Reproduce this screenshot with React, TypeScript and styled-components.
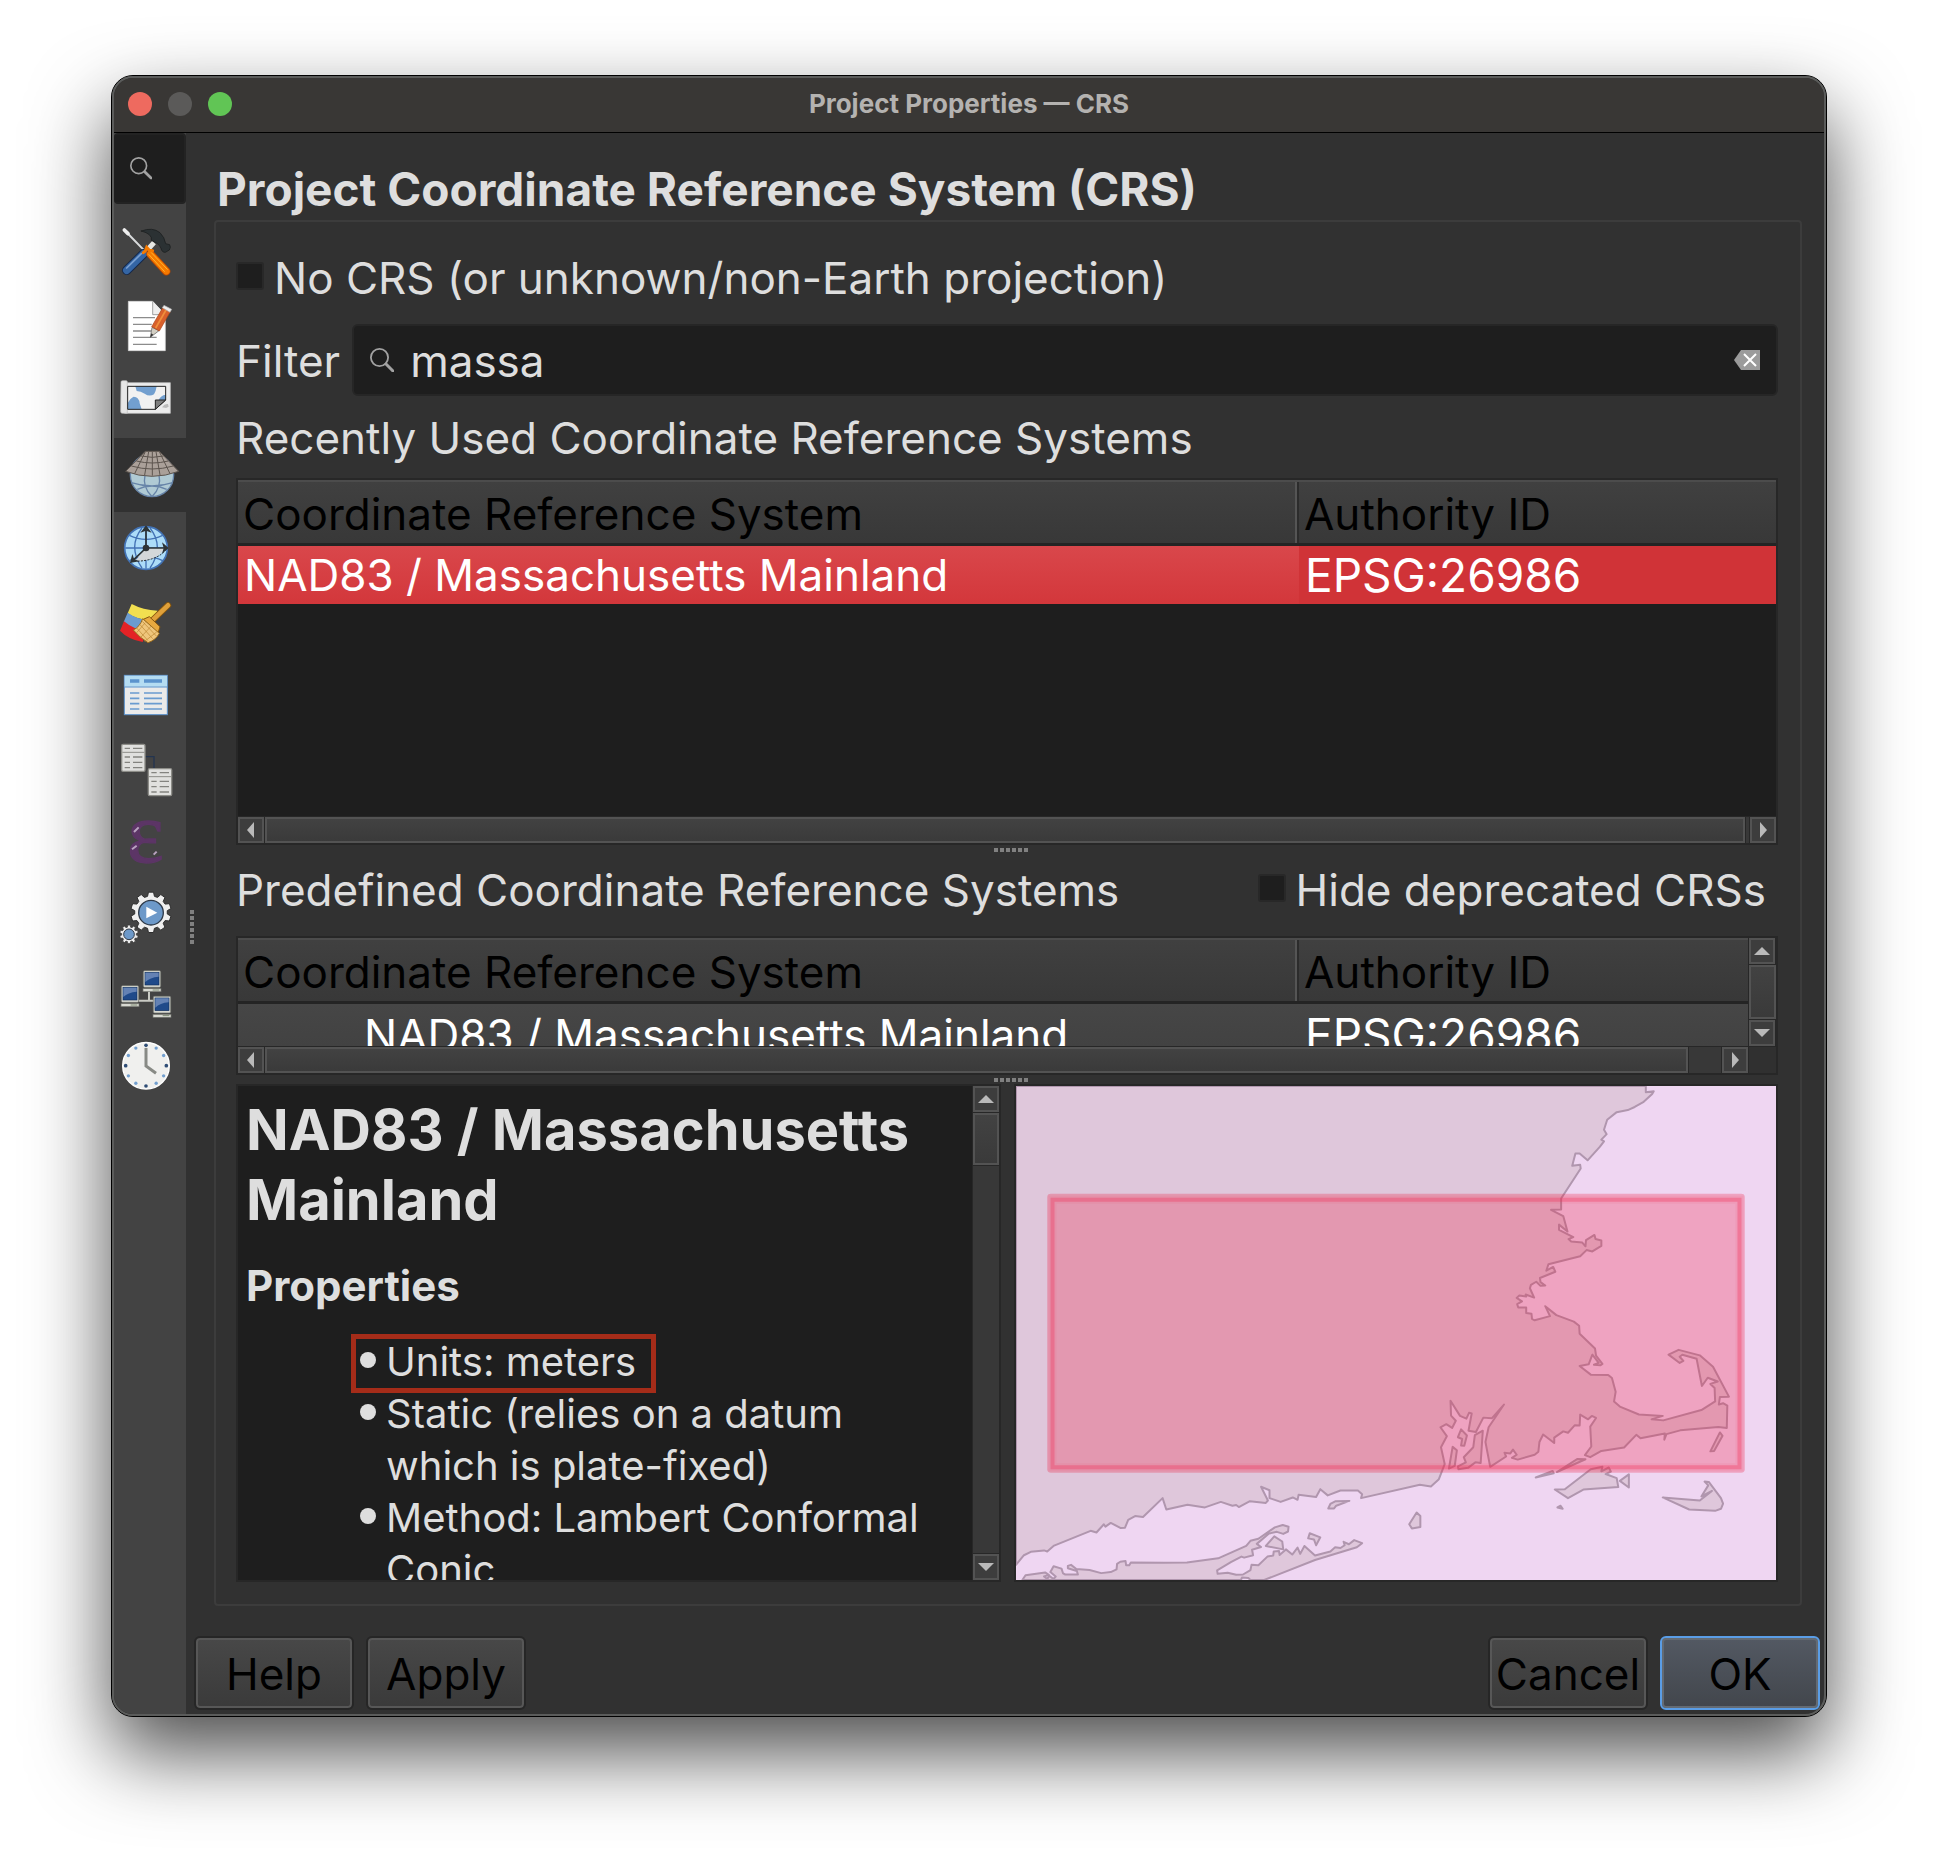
import React from "react";
import styled, { createGlobalStyle, css } from "styled-components";

const color = {
  panel: "#313131",
  sidebar: "#434343",
  well: "#1e1e1e",
  line: "#272727",
  edge: "#535353",
  text: "#dedede",
};

const GlobalStyle = createGlobalStyle`
  *, *::before, *::after { box-sizing: border-box; }
  body { margin: 0; background: #fff; }
  body, button, input { font-family: Inter, "Liberation Sans", sans-serif; }
`;

const Page = styled.div`
  display: flex;
  height: 100vh;
  min-height: 1500px;
  padding: 75px 111px 147px;
`;

const Window = styled.section`
  display: flex;
  flex: 1;
  min-width: 0;
  border: 1px solid #000;
  border-radius: 22px;
  background: #5b5c5b;
  box-shadow: 0 36px 80px rgba(0, 0, 0, 0.7);
`;

const Frame = styled.div`
  display: flex;
  flex: 1;
  flex-direction: column;
  min-width: 0;
  overflow: hidden;
  border: 2px solid #5b5c5b;
  border-radius: 21px;
  background: ${color.panel};
  color: ${color.text};
  font-size: 44px;
  line-height: 56px;
`;

const TitleBar = styled.header`
  display: grid;
  grid-template-columns: 1fr auto 1fr;
  align-items: center;
  height: 55px;
  flex: none;
  padding: 0 14px 2px;
  border-bottom: 1px solid #000;
  background: #393735;
`;

const Lights = styled.div`
  display: flex;
  gap: 16px;
`;

const Light = styled.button<{ $tint: string }>`
  width: 24px;
  height: 24px;
  padding: 0;
  border: 0;
  border-radius: 50%;
  background: ${(p) => p.$tint};
`;

const WindowTitle = styled.div`
  color: #b4b2b0;
  font-size: 26px;
  font-weight: 700;
  line-height: 32px;
`;

const Body = styled.div`
  display: flex;
  flex: 1;
  min-height: 0;
`;

const Sidebar = styled.aside`
  width: 72px;
  flex: none;
  background: ${color.sidebar};
`;

const SideSearch = styled.label`
  display: flex;
  align-items: center;
  height: 71px;
  padding: 0 16px 2px;
  border: 2px solid #232323;
  border-left-width: 0;
  border-radius: 4px;
  background: ${color.well};
`;

const SideInput = styled.input`
  width: 16px;
  padding: 0;
  border: 0;
  outline: 0;
  background: transparent;
  color: ${color.text};
`;

const SideNav = styled.nav`
  display: flex;
  flex-direction: column;
  padding-top: 12px;
`;

const SideItem = styled.button<{ $active: boolean }>`
  display: flex;
  align-items: center;
  height: 74px;
  padding: 0 0 0 ${(p) => (p.$active ? 12 : 6)}px;
  border: 0;
  background: ${(p) => (p.$active ? color.panel : "transparent")};

  svg {
    width: 52px;
    height: 52px;
    overflow: visible;
  }
`;

const dots = (angle: string) => css`
  background: repeating-linear-gradient(${angle}, #808080 0 4px, transparent 4px 6px);
`;

const SideSplitter = styled.div`
  display: flex;
  align-items: center;
  justify-content: flex-end;
  width: 8px;
  flex: none;
  padding-top: 6px;

  &::before {
    content: "";
    width: 4px;
    height: 34px;
    ${dots("180deg")}
  }
`;

const Splitter = styled.div<{ $after: number }>`
  display: flex;
  justify-content: center;
  flex: none;
  padding: 3px 0 ${(p) => p.$after}px;

  &::before {
    content: "";
    width: 34px;
    height: 4px;
    margin-left: 8px;
    ${dots("90deg")}
  }
`;

const Main = styled.main`
  display: flex;
  flex: 1;
  flex-direction: column;
  min-width: 0;
  padding: 28px 4px 4px 0;
`;

const Heading = styled.h1`
  margin: 0 23px 3px;
  font-size: 46px;
  font-weight: 700;
  line-height: 56px;
`;

const Group = styled.div`
  display: flex;
  flex: 1;
  flex-direction: column;
  min-height: 0;
  margin: 0 18px 30px 20px;
  padding: 28px 22px 22px 20px;
  border: 2px solid #3c3c3c;
  border-radius: 4px;
`;

const CheckLabel = styled.label`
  display: flex;
  align-items: center;
  gap: 10px;
`;

const Check = styled.input`
  appearance: none;
  width: 28px;
  height: 28px;
  margin: 0 0 4px;
  border: 2px solid #282828;
  border-radius: 3px;
  background: ${color.well};

  &:checked {
    background: #8a8a8a;
  }
`;

const FilterRow = styled.div`
  display: flex;
  align-items: center;
  gap: 12px;
  margin: 18px 0 14px;
`;

const FilterLabel = styled.label`
  padding-top: 2px;
`;

const FilterBox = styled.div`
  display: flex;
  align-items: center;
  flex: 1;
  height: 72px;
  padding: 0 16px;
  border: 2px solid #262626;
  border-radius: 6px;
  background: ${color.well};
`;

const FilterInput = styled.input`
  flex: 1;
  min-width: 0;
  height: 56px;
  padding: 2px 0 0 16px;
  border: 0;
  outline: 0;
  background: transparent;
  color: ${color.text};
  font-size: 44px;
`;

const PlainButton = styled.button`
  display: flex;
  padding: 0;
  border: 0;
  background: none;
`;

const SectionRow = styled.div`
  display: flex;
  align-items: center;
  justify-content: space-between;
  padding-right: 12px;
`;

const SectionTitle = styled.h2`
  margin: 0;
  font-size: 44px;
  font-weight: 400;
  line-height: 56px;
`;

const TreeFrame = styled.div<{ $height: number; $gap: number; $scrollY?: boolean }>`
  display: grid;
  grid-template-columns: minmax(0, 1fr) ${(p) => (p.$scrollY ? "28px" : "")};
  grid-template-rows: minmax(0, 1fr) 27px;
  flex: none;
  height: ${(p) => p.$height}px;
  margin-top: ${(p) => p.$gap}px;
  border: 2px solid ${color.line};
  background: ${color.well};
`;

const TreeView = styled.div`
  overflow: hidden;
`;

const Tree = styled.table`
  width: 100%;
  table-layout: fixed;
  border-collapse: separate;
  border-spacing: 0;
  text-align: left;
  white-space: nowrap;
`;

const NameColumn = styled.col`
  width: 1061px;
`;

const HeadCell = styled.th<{ $divided?: boolean }>`
  height: 66px;
  padding: 2px 5px 0;
  border-top: 2px solid #4c4c4c;
  border-bottom: 3px solid #242424;
  background: linear-gradient(#404040, #383838);
  box-shadow: ${(p) => (p.$divided ? "inset -2px 0 #2c2c2c, inset -4px 0 #555" : "none")};
  color: #000;
  font-weight: 400;
`;

type Tone = "name" | "id" | "idle";

const cellBackground: Record<Tone, string> = {
  name: "linear-gradient(#d9474b, #d3373b)",
  id: "#d03337",
  idle: "linear-gradient(#464646, #404040)",
};

const Cell = styled.td<{ $tone: Tone; $indent?: boolean; $code?: boolean }>`
  height: ${(p) => (p.$tone === "idle" ? 62 : 58)}px;
  padding: 0 0 0 ${(p) => (p.$indent ? 126 : 6)}px;
  background: ${(p) => cellBackground[p.$tone]};
  color: #fff;
  font-size: ${(p) => (p.$code ? 46 : 44)}px;
`;

const Bar = styled.div<{ $vertical?: boolean }>`
  display: flex;
  flex-direction: ${(p) => (p.$vertical ? "column" : "row")};
  gap: 1px;
  border-${(p) => (p.$vertical ? "left" : "top")}: 1px solid ${color.line};
  background: #383838;
`;

const Arrow = styled.button`
  display: grid;
  place-items: center;
  width: 26px;
  height: 26px;
  flex: none;
  padding: 0;
  border: 2px solid ${color.edge};
  outline: 1px solid ${color.line};
  background: #3d3d3d;
`;

const Thumb = styled.div<{ $length?: number }>`
  flex: ${(p) => (p.$length ? `0 0 ${p.$length}px` : "1")};
  border: 2px solid ${color.edge};
  outline: 1px solid ${color.line};
  background: linear-gradient(#424242, #3a3a3a);
`;

const Track = styled.div<{ $length?: number }>`
  flex: ${(p) => (p.$length ? `0 0 ${p.$length}px` : "1")};
`;

const Corner = styled.div`
  border: solid ${color.line};
  border-width: 1px 0 0 1px;
  background: #303030;
`;

const Details = styled.div`
  display: flex;
  flex: 1;
  gap: 13px;
  min-height: 0;
`;

const InfoPane = styled.div`
  display: grid;
  grid-template-columns: minmax(0, 1fr) 27px;
  flex: 765 1 0;
  min-width: 0;
  border: 2px solid ${color.line};
  background: ${color.well};
`;

const InfoText = styled.article`
  overflow: hidden;
  padding: 9px 8px 0;
`;

const InfoTitle = styled.h2`
  margin: 0 0 25px;
  font-size: 56px;
  font-weight: 700;
  line-height: 70px;
`;

const InfoSubtitle = styled.h3`
  margin: 0 0 24px;
  font-size: 42px;
  font-weight: 700;
  line-height: 52px;
`;

const InfoList = styled.ul`
  display: flex;
  flex-direction: column;
  align-items: flex-start;
  margin: 0;
  padding: 0 0 0 114px;
  font-size: 40px;
  line-height: 52px;
  list-style: none;
`;

const InfoItem = styled.li<{ $marked?: boolean }>`
  position: relative;
  display: flex;
  gap: 10px;

  &::before {
    content: "";
    width: 16px;
    height: 16px;
    flex: none;
    margin-top: 16px;
    border-radius: 50%;
    background: ${color.text};
  }

  ${(p) =>
    p.$marked &&
    css`
      &::after {
        content: "";
        position: absolute;
        inset: -2px -20px -5px -9px;
        border: 5px solid #a52c19;
      }
    `}
`;

const MapPane = styled.div`
  flex: 764 1 0;
  min-width: 0;
  border: 2px solid ${color.line};

  svg {
    display: block;
    width: 100%;
    height: 100%;
  }
`;

const Footer = styled.footer`
  display: flex;
  gap: 12px;
`;

const Push = styled.div`
  flex: 1;
`;

const DialogButton = styled.button<{ $primary?: boolean }>`
  width: 160px;
  height: 74px;
  padding: 2px 0 0;
  border: 2px solid ${(p) => (p.$primary ? "#5a9de6" : "#262626")};
  border-radius: 6px;
  background: ${(p) =>
    p.$primary ? "linear-gradient(#535963, #42464c)" : "linear-gradient(#484848, #3a3a3a)"};
  box-shadow: inset 0 0 0 2px ${(p) => (p.$primary ? "#646b73" : "#575757")};
  color: #000;
  font-size: 44px;
  line-height: 56px;
`;

function Magnifier() {
  return (
    <svg width="24" height="24" viewBox="0 0 24 24" fill="none" stroke="#a2a2a2" aria-hidden="true">
      <circle cx="9.5" cy="9.5" r="8.6" strokeWidth="1.8" />
      <path d="M16 16l7 7" strokeWidth="3" strokeLinecap="round" />
    </svg>
  );
}

const arrowPaths = {
  left: "M14 3v16L7 11z",
  right: "M8 3v16l7-8z",
  up: "M3 15h16L11 7z",
  down: "M3 7h16l-8 8z",
};

function ScrollArrow({ to }: { to: keyof typeof arrowPaths }) {
  return (
    <Arrow type="button" aria-label={`Scroll ${to}`}>
      <svg width="22" height="22" viewBox="0 0 22 22" aria-hidden="true">
        <path d={arrowPaths[to]} fill="#b9b9b9" />
      </svg>
    </Arrow>
  );
}

const gearPath = (cx: number, cy: number, outer: number, inner: number, teeth: number) => {
  const step = (Math.PI * 2) / teeth;
  const at = (r: number, a: number) =>
    `${(cx + r * Math.cos(a)).toFixed(1)} ${(cy + r * Math.sin(a)).toFixed(1)}`;
  let d = "";
  for (let i = 0; i < teeth; i++) {
    const a = i * step + step / 2;
    d += `${i ? "L" : "M"}${at(inner, a - step * 0.34)}L${at(outer, a - step * 0.2)}L${at(outer, a + step * 0.2)}L${at(inner, a + step * 0.34)}`;
  }
  return `${d}Z`;
};

function Computer({ x, y }: { x: number; y: number }) {
  return (
    <g transform={`translate(${x} ${y})`}>
      <rect x="0" y="0" width="52" height="50" rx="4" fill="#d8d9d2" stroke="#70726c" strokeWidth="2" />
      <rect x="5" y="5" width="42" height="38" fill="#1f4a8a" stroke="#14305c" strokeWidth="2" />
      <path d="M6 6h40v12Q20 20 6 34z" fill="#6482b4" />
      <rect x="-1" y="54" width="54" height="9" fill="#d8d9d2" stroke="#70726c" strokeWidth="2" />
      <path d="M28 58h20" stroke="#7d8a72" strokeWidth="3" />
    </g>
  );
}

function Sheet({ x, y }: { x: number; y: number }) {
  return (
    <g transform={`translate(${x} ${y})`}>
      <rect width="70" height="81" rx="4" fill="#e0e0de" stroke="#8d8d88" strokeWidth="4" />
      <path d="M2 24h66" stroke="#8d8d88" strokeWidth="3" />
      <path
        d="M9 12h16M34 12h28M9 38h16M34 38h28M9 54h16M34 54h28M9 70h16M34 70h28"
        stroke="#83837f"
        strokeWidth="4"
      />
    </g>
  );
}

const clockDots = Array.from({ length: 12 }, (_, i) => {
  const a = (i * Math.PI) / 6;
  return { x: 108 + 61 * Math.cos(a), y: 1247 + 61 * Math.sin(a), main: i % 3 === 0 };
});

const sections: { name: string; box: string; art: React.ReactNode; active?: boolean }[] = [
  {
    name: "General",
    box: "30 81 156 156",
    art: (
      <g strokeLinecap="round">
        <path d="M46 93l60 62" stroke="#d9dbdc" strokeWidth="6" />
        <path d="M43 90l11 11" stroke="#eee" strokeWidth="11" />
        <path d="M101 161l-51 50" stroke="#16294a" strokeWidth="28" />
        <path d="M101 161l-51 50" stroke="#3465a4" strokeWidth="22" />
        <path d="M94 161l-44 43" stroke="#7ba1d2" strokeWidth="5" />
        <path d="M132 128l-20 22" stroke="#e6e6e2" strokeWidth="15" strokeLinecap="butt" />
        <path
          d="M94 93Q128 80 150 98Q164 112 167 131L179 134Q184 142 178 150L166 157Q156 158 153 145Q150 136 141 130L124 121Q128 102 94 93Z"
          fill="#2b3133"
          stroke="#16191a"
          strokeWidth="2"
        />
        <path d="M121 162l48 52" stroke="#b84700" strokeWidth="25" />
        <path d="M121 162l48 52" stroke="#f57900" strokeWidth="20" />
        <path d="M100 158l6-5 4-11 8 9 10 1" fill="none" stroke="#f57900" strokeWidth="9" />
        <path d="M124 158l48 50M117 164l46 50" stroke="#ffb52c" strokeWidth="3" />
      </g>
    ),
  },
  {
    name: "Metadata",
    box: "30 303 156 156",
    art: (
      <g>
        <path d="M55 304h73l38 40v108H55z" fill="#fff" stroke="#dadada" strokeWidth="2" />
        <path d="M128 304v40h38" fill="#eee" stroke="#777" strokeWidth="2" />
        <path d="M69 353h66M69 373h56M69 393h54M69 412h71M69 433h71" stroke="#8c8c8c" strokeWidth="4" />
        <path d="M121 412l5-30 21 10z" fill="#d3cfc4" stroke="#555" strokeWidth="2" />
        <path d="M121 412l3-12 6 4z" fill="#333" />
        <path d="M125 380l34-58 22 13-33 58z" fill="#d9602b" stroke="#a8441a" strokeWidth="2" />
        <path d="M137 384l31-54" stroke="#f08f3c" strokeWidth="5" />
        <path d="M157 323l5-7 23 12-5 9z" fill="#eee" stroke="#aaa" strokeWidth="2" />
      </g>
    ),
  },
  {
    name: "View Settings",
    box: "30 525 156 156",
    art: (
      <g>
        <path d="M44 548h137v92H44z" fill="#ececec" stroke="#c4c4c4" strokeWidth="2" />
        <path d="M33 546q0-4 5-4h10q4 0 4 4v94H38q-7 0-6-8z" fill="#e6e6e6" stroke="#bdbdbd" strokeWidth="2" />
        <path d="M53 559h114v41l-31 28H53z" fill="#f1f1f1" />
        <path d="M76 559h64q-2 14-8 24-14 8-28-2-12-8-24-8z" fill="#729fcf" />
        <path d="M53 628v-18q8-16 18-20 16 0 18 20l6 18zM146 600q6-14 21-16v16z" fill="#729fcf" />
        <path d="M53 559h114v41l-31 28H53z" fill="none" stroke="#222" strokeWidth="3" />
        <path d="M136 628v-28h31z" fill="#7d7d7d" stroke="#222" strokeWidth="3" />
        <path d="M156 622q8-12 18-10l2 8-8 4z" fill="#bbb" />
      </g>
    ),
  },
  {
    name: "CRS",
    box: "48 747 156 156",
    active: true,
    art: (
      <g>
        <circle cx="126" cy="825" r="65" fill="#b0cad4" stroke="#6784a8" strokeWidth="4" />
        <path
          d="M64 848q62 20 124 0M105 825q-8 36 20 64M147 825q8 36-20 64M82 868q44-20 88 0"
          fill="none"
          stroke="#6784a8"
          strokeWidth="4"
        />
        <path d="M106 754h42l58 60q-80 30-159 0z" fill="#aaa099" stroke="#5d554f" strokeWidth="3" />
        <path
          d="M93 768q34 8 68 0M79 783q48 12 96 0M64 798q62 18 126 0M116 755l-12 70M138 755l12 70M127 755v72M106 755l-32 66M148 755l32 66"
          fill="none"
          stroke="#5d554f"
          strokeWidth="3"
        />
      </g>
    ),
  },
  {
    name: "Transformations",
    box: "30 969 156 156",
    art: (
      <g>
        <circle cx="108" cy="1044" r="64" fill="#acdcf8" stroke="#4272b4" strokeWidth="5" />
        <path
          d="M58 1006q50 24 100 0M46 1044h124M58 1082q50-24 100 0M108 982v124M96 984q-44 56 0 120M120 984q44 56 0 120"
          fill="none"
          stroke="#4272b4"
          strokeWidth="4"
        />
        <path d="M108 1044h56q-20 40-88 38z" fill="#d3d7d9" />
        <path d="M168 1048q-24 34-92 36" fill="none" stroke="#222" strokeWidth="3" strokeDasharray="6 4" />
        <path d="M108 986v58h58M108 1044l-42 40" fill="none" stroke="#2d3335" strokeWidth="5" />
        <circle cx="108" cy="1044" r="10" fill="#2d3335" />
        <path d="M108 976l-17 22 17-6 17 6zM176 1044l-20-17 5 17-5 17zM60 1089l7-27 5 14 15 8z" fill="#2d3335" />
      </g>
    ),
  },
  {
    name: "Styles",
    box: "30 1191 156 156",
    art: (
      <g>
        <path d="M65 1212q34 18 78 20l-18 30q-44-2-72-22z" fill="#f2df50" />
        <path d="M53 1238q30 22 74 24l-20 34q-42-8-66-30z" fill="#6b9bd0" />
        <path d="M42 1264q28 24 68 30l-12 32q-44-8-68-34z" fill="#e32226" />
        <path d="M126 1262l48-46" stroke="#85550d" strokeWidth="19" strokeLinecap="round" />
        <path d="M126 1262l48-46" stroke="#dfa03a" strokeWidth="14" strokeLinecap="round" />
        <path d="M100 1258l18-8 32 30-6 20z" fill="#e8a93f" stroke="#85550d" strokeWidth="3" />
        <path d="M98 1256l50 44q-10 20-34 28-24-14-44-38 20-10 28-34z" fill="#efc67c" stroke="#9a6b1c" strokeWidth="3" />
        <path d="M80 1284l34 38M90 1274l38 42M97 1264l42 44M104 1324l36-28M92 1312l32-34M80 1298l26-30" stroke="#b98531" strokeWidth="2" />
      </g>
    ),
  },
  {
    name: "Data Sources",
    box: "30 63 156 156",
    art: (
      <g>
        <rect x="43" y="76" width="129" height="118" fill="#eaeaea" stroke="#5b93cd" strokeWidth="3" />
        <path d="M44 77h127v33H44z" fill="#b4dcf2" />
        <path d="M43 111h129" stroke="#5b93cd" strokeWidth="3" />
        <path d="M60 93h28M102 93h54" stroke="#5b93cd" strokeWidth="11" />
        <path
          d="M60 129h28M102 129h54M60 145h28M102 145h54M60 161h28M102 161h54M60 177h28M102 177h54"
          stroke="#6a9bd0"
          strokeWidth="5"
        />
      </g>
    ),
  },
  {
    name: "Relations",
    box: "30 285 156 156",
    art: (
      <g>
        <path d="M106 320h26v36" fill="none" stroke="#23344f" strokeWidth="4" />
        <Sheet x={35} y={283} />
        <Sheet x={115} y={356} />
      </g>
    ),
  },
  {
    name: "Variables",
    box: "30 507 156 156",
    art: (
      <g>
        <text
          x="106"
          y="635"
          fill="#5c3566"
          stroke="#5c3566"
          strokeWidth="4"
          fontFamily="Liberation Serif, serif"
          fontSize="262"
          textAnchor="middle"
        >
          ε
        </text>
        <path d="M72 546l14-14M66 598l14-11M131 614l9-9" stroke="#b9a3c0" strokeWidth="6" />
      </g>
    ),
  },
  {
    name: "Macros",
    box: "30 729 156 156",
    art: (
      <g>
        <path d={gearPath(123, 787, 61, 49, 10)} fill="#efefef" stroke="#2e2e2e" strokeWidth="3" />
        <circle cx="123" cy="788" r="37" fill="#6d99c9" stroke="#2f3a48" strokeWidth="4" />
        <path d="M109 770v35l33-17z" fill="#fff" />
        <path d={gearPath(57, 853, 28, 22, 10)} fill="#efefef" stroke="#3a3a3a" strokeWidth="2" />
        <circle cx="57" cy="853" r="16" fill="#6d99c9" stroke="#2f3a48" strokeWidth="3" />
      </g>
    ),
  },
  {
    name: "QGIS Server",
    box: "30 951 156 156",
    art: (
      <g>
        <path d="M117 1020v32M86 1052h46" stroke="#c9cac4" strokeWidth="6" />
        <Computer x={100} y={962} />
        <Computer x={34} y={1007} />
        <Computer x={130} y={1039} />
      </g>
    ),
  },
  {
    name: "Temporal",
    box: "30 1173 156 156",
    art: (
      <g>
        <circle cx="108" cy="1247" r="70" fill="#f0f0ee" stroke="#fff" strokeWidth="4" />
        {clockDots.map((d, i) => (
          <circle key={i} cx={d.x} cy={d.y} r={d.main ? 5.5 : 5} fill={d.main ? "#2f4d76" : "#729fcf"} />
        ))}
        <path d="M108 1194v54l30 22" fill="none" stroke="#888a85" strokeWidth="9" />
      </g>
    ),
  },
];

const mainlandPath =
  "M11 45H1201V63L1216 60L1213 68L1197 91L1180 106L1167 115L1146 121L1128 143L1122 172L1127 185L1117 201L1122 206L1114 222L1091 261L1076 241L1068 241L1062 277L1077 274L1078 285L1041 372L1041 404L1022 405L1045 423L1053 468L1037 448L1037 463L1064 484L1055 490L1060 497L1081 500L1087 511L1088 493L1104 478L1106 490L1117 494L1117 510L1100 526L1089 522L1077 540L1017 563L1013 582L1026 571L1030 585L1001 603L1002 615L1011 625L1002 626L994 614L984 623L982 633L990 660L974 651L975 657L962 654L957 661L967 671L958 679L960 689L975 689L975 705L985 707L986 722L991 726L1020 714L1011 685L1032 711L1065 730L1075 742L1076 765L1105 808L1107 829L1119 853L1115 857L1103 855L1112 850L1100 826L1093 854L1076 859L1097 884L1130 885L1137 894L1144 934L1141 962L1152 977L1188 1000L1233 1004L1212 1014L1234 1017L1306 987L1332 962L1331 923L1323 911L1337 904L1318 893L1307 917L1297 838L1270 826L1265 832L1272 844L1265 850L1244 826L1263 812L1303 828L1328 861L1358 948L1341 949L1339 971L1347 967L1355 974L1354 1039L1338 1036L1266 1046L1240 1057L1236 1073L1237 1055L1191 1069L1183 1059L1160 1096L1117 1106L1096 1124L1086 1118L1098 1093L1096 1035L1107 1010L1099 1004L1092 1014L1077 1000L1076 1032L1067 1031L1054 1053L1045 1049L1028 1067L1028 1083L1007 1058L1000 1080L998 1108L991 1117L959 1131L948 1126L957 1117L950 1102L945 1113L934 1111L937 1122L907 1152L898 1080L904 1037L933 971L910 1011L894 1009L880 1051L866 1047L872 997L867 995L862 1012L850 1004L832 960L833 1003L842 1018L835 1039L824 1028L813 1037L825 1063L814 1095L821 1144L810 1188L795 1209L774 1204L663 1243L665 1232L657 1221L624 1221L600 1235L586 1217L578 1240L545 1233L543 1248L534 1241L511 1254L490 1243L490 1220L474 1210L487 1250L483 1257L453 1252L432 1269L427 1263L420 1265L398 1254L368 1270L335 1262L295 1276L288 1243L251 1298L236 1295L223 1306L217 1329L209 1330L190 1315L180 1326L177 1319L163 1343L152 1338L83 1381L70 1398L64 1395L39 1399L26 1409L11 1437Z";

const islandPaths = [
  "M23 1481L29 1467L66 1459L73 1466L64 1471L70 1478L74 1469L82 1478L86 1471L76 1458L82 1441L97 1448L100 1462L104 1465L128 1465L126 1455L109 1447L109 1440L115 1437L125 1449L150 1452L172 1461L190 1458L201 1450L202 1434L208 1428L218 1426L219 1438L225 1438L228 1430L290 1431L334 1430L393 1418L446 1382L454 1367L469 1361L500 1328L515 1321L526 1326L525 1340L516 1347L504 1341L489 1346L466 1376L474 1385L457 1393L459 1409L442 1416L437 1413L417 1429L391 1453L392 1463L411 1460L427 1466L440 1465L454 1452L456 1437L469 1438L486 1413L497 1410L498 1398L508 1397L509 1408L521 1392L533 1407L543 1387L548 1405L556 1382L576 1410L605 1398L614 1386L624 1388L632 1380L630 1370L640 1377L650 1365L665 1374L655 1386L576 1423L480 1481H454L450 1475L438 1474L436 1481Z",
  "M483 1382L499 1354L514 1369L516 1392Z",
  "M566 1345L586 1357L578 1380L574 1363L563 1360Z",
  "M601 1273L605 1260L615 1252L641 1251L616 1265L612 1273Z",
  "M768 1285L775 1295L775 1327L759 1331L754 1319Z",
  "M1054 1243L1029 1218L1048 1217L1097 1159L1119 1152L1117 1165L1131 1154L1135 1166L1125 1173L1146 1185L1149 1211L1083 1218Z",
  "M1152 1193L1169 1174V1212Z",
  "M993 1183L1025 1164L1027 1171Z",
  "M1033 1167L1072 1129L1087 1130Z",
  "M1341 1052L1346 1062L1330 1106L1323 1107Z",
  "M1312 1195L1320 1196L1343 1243L1347 1259L1343 1274L1332 1280L1283 1276L1233 1241L1303 1250L1326 1222L1306 1238L1319 1206Z",
  "M1034 1270L1040 1265L1044 1274Z",
  "M829 1157L836 1094L844 1104L840 1149Z",
  "M852 1043L863 1061L858 1091L852 1090L854 1071L846 1066Z",
  "M893 1047L889 1141L879 1139L865 1155L847 1159L846 1151L861 1139L857 1124L875 1095L878 1060Z",
];

function ExtentMap() {
  return (
    <svg viewBox="11 45 1436 1436" preserveAspectRatio="none" role="img" aria-label="Area of use">
      <rect x="11" y="45" width="1436" height="1436" fill="#efd6f2" />
      <g fill="#dfc7db" stroke="#b096ae" strokeWidth="2" strokeLinejoin="round">
        <path d={mainlandPath} vectorEffect="non-scaling-stroke" />
        {islandPaths.map((d) => (
          <path key={d} d={d} vectorEffect="non-scaling-stroke" />
        ))}
      </g>
      <rect x="70" y="358" width="1318" height="811" rx="7" ry="10" fill="#f00c2e" fillOpacity="0.25" />
      <path
        d="M80 376H1378V1153H80Z"
        fill="none"
        stroke="#f4365a"
        strokeOpacity="0.34"
        strokeWidth="4"
        vectorEffect="non-scaling-stroke"
      />
      <path
        d="M80 376H1378V1153H80Z"
        fill="none"
        stroke="#f4365a"
        strokeOpacity="0.08"
        strokeWidth="8"
        vectorEffect="non-scaling-stroke"
      />
    </svg>
  );
}

function TreeHead() {
  return (
    <>
      <colgroup>
        <NameColumn />
        <col />
      </colgroup>
      <thead>
        <tr>
          <HeadCell scope="col" $divided>
            Coordinate Reference System
          </HeadCell>
          <HeadCell scope="col">Authority ID</HeadCell>
        </tr>
      </thead>
    </>
  );
}

export default function App() {
  return (
    <Page>
      <GlobalStyle />
      <Window>
        <Frame>
          <TitleBar>
            <Lights>
              <Light type="button" aria-label="Close" $tint="#ee6a5f" />
              <Light type="button" aria-label="Minimize" $tint="#5b5a59" />
              <Light type="button" aria-label="Zoom" $tint="#61c555" />
            </Lights>
            <WindowTitle>Project Properties — CRS</WindowTitle>
          </TitleBar>
          <Body>
            <Sidebar>
              <SideSearch>
                <Magnifier />
                <SideInput type="text" aria-label="Search options" />
              </SideSearch>
              <SideNav>
                {sections.map((s) => (
                  <SideItem key={s.name} type="button" aria-label={s.name} $active={!!s.active}>
                    <svg viewBox={s.box} aria-hidden="true">
                      {s.art}
                    </svg>
                  </SideItem>
                ))}
              </SideNav>
            </Sidebar>
            <SideSplitter />
            <Main>
              <Heading>Project Coordinate Reference System (CRS)</Heading>
              <Group>
                <CheckLabel>
                  <Check type="checkbox" />
                  No CRS (or unknown/non-Earth projection)
                </CheckLabel>
                <FilterRow>
                  <FilterLabel htmlFor="crs-filter">Filter</FilterLabel>
                  <FilterBox>
                    <Magnifier />
                    <FilterInput id="crs-filter" type="text" defaultValue="massa" />
                    <PlainButton type="button" aria-label="Clear filter">
                      <svg width="26" height="20" viewBox="0 0 26 20" aria-hidden="true">
                        <path d="M0 10L7 0h19v20H7z" fill="#9b9b9b" />
                        <path d="M10 4l12 12M22 4L10 16" stroke="#fff" strokeWidth="2" />
                      </svg>
                    </PlainButton>
                  </FilterBox>
                </FilterRow>
                <SectionTitle>Recently Used Coordinate Reference Systems</SectionTitle>
                <TreeFrame $height={367} $gap={12}>
                  <TreeView>
                    <Tree>
                      <TreeHead />
                      <tbody>
                        <tr>
                          <Cell $tone="name">NAD83 / Massachusetts Mainland</Cell>
                          <Cell $tone="id" $code>
                            EPSG:26986
                          </Cell>
                        </tr>
                      </tbody>
                    </Tree>
                  </TreeView>
                  <Bar>
                    <ScrollArrow to="left" />
                    <Thumb />
                    <Track $length={3} />
                    <ScrollArrow to="right" />
                  </Bar>
                </TreeFrame>
                <Splitter $after={10} />
                <SectionRow>
                  <SectionTitle>Predefined Coordinate Reference Systems</SectionTitle>
                  <CheckLabel>
                    <Check type="checkbox" />
                    Hide deprecated CRSs
                  </CheckLabel>
                </SectionRow>
                <TreeFrame $height={139} $gap={18} $scrollY>
                  <TreeView>
                    <Tree>
                      <TreeHead />
                      <tbody>
                        <tr>
                          <Cell $tone="idle" $indent>
                            NAD83 / Massachusetts Mainland
                          </Cell>
                          <Cell $tone="idle" $code>
                            EPSG:26986
                          </Cell>
                        </tr>
                      </tbody>
                    </Tree>
                  </TreeView>
                  <Bar $vertical>
                    <ScrollArrow to="up" />
                    <Thumb />
                    <ScrollArrow to="down" />
                  </Bar>
                  <Bar>
                    <ScrollArrow to="left" />
                    <Thumb />
                    <Track $length={32} />
                    <ScrollArrow to="right" />
                  </Bar>
                  <Corner />
                </TreeFrame>
                <Splitter $after={2} />
                <Details>
                  <InfoPane>
                    <InfoText>
                      <InfoTitle>NAD83 / Massachusetts Mainland</InfoTitle>
                      <InfoSubtitle>Properties</InfoSubtitle>
                      <InfoList>
                        <InfoItem $marked>Units: meters</InfoItem>
                        <InfoItem>Static (relies on a datum which is plate-fixed)</InfoItem>
                        <InfoItem>Method: Lambert Conformal Conic</InfoItem>
                      </InfoList>
                    </InfoText>
                    <Bar $vertical>
                      <ScrollArrow to="up" />
                      <Thumb $length={52} />
                      <Track />
                      <ScrollArrow to="down" />
                    </Bar>
                  </InfoPane>
                  <MapPane>
                    <ExtentMap />
                  </MapPane>
                </Details>
              </Group>
              <Footer>
                <DialogButton type="button">Help</DialogButton>
                <DialogButton type="button">Apply</DialogButton>
                <Push />
                <DialogButton type="button">Cancel</DialogButton>
                <DialogButton type="button" $primary>
                  OK
                </DialogButton>
              </Footer>
            </Main>
          </Body>
        </Frame>
      </Window>
    </Page>
  );
}
